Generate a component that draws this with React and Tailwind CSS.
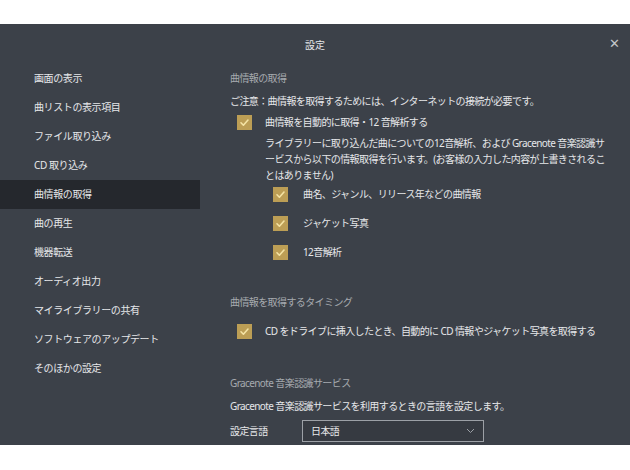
import React from "react";

const font = { fontFamily: '"Noto Sans", "Noto Sans CJK JP", sans-serif' };

function Check({ className = "" }) {
  return (
    <span className={`flex h-[15px] w-[15px] shrink-0 items-center justify-center bg-[#bc9e55] ${className}`}>
      <svg width="11" height="11" viewBox="0 0 11 11" fill="none">
        <path d="M2 5.8 L4.4 8.2 L9 3" stroke="#f4e3a4" strokeWidth="1.6" strokeLinecap="round" strokeLinejoin="round" />
      </svg>
    </span>
  );
}

const items = [
  "画面の表示",
  "曲リストの表示項目",
  "ファイル取り込み",
  "CD 取り込み",
  "曲情報の取得",
  "曲の再生",
  "機器転送",
  "オーディオ出力",
  "マイライブラリーの共有",
  "ソフトウェアのアップデート",
  "そのほかの設定",
];

export default function App() {
  return (
    <div className="w-[630px] h-[470px] bg-white pt-[24px] overflow-hidden" style={font}>
      <div className="h-[421px] bg-[#3c4149] flex flex-col text-[#e6e7e9] overflow-hidden">
        <div className="relative h-[40px] shrink-0 flex items-center justify-center text-[10px] pt-[2px]">
          <span>設定</span>
          <span className="absolute right-[10px] top-[13px] text-[#c3c6ca] text-[13px] leading-none">✕</span>
        </div>
        <div className="flex flex-1 min-h-0">
          <div className="w-[200px] shrink-0 flex flex-col tracking-[-0.4px]">
            {items.map((t, i) => (
              <div
                key={t}
                className={`h-[29px] shrink-0 flex items-center pl-[34px] text-[10px] whitespace-nowrap ${i === 4 ? "bg-[#25282d]" : ""}`}
              >
                {t}
              </div>
            ))}
          </div>
          <div className="flex-1 pl-[30px] pt-[6px] text-[10px] leading-[16px] flex flex-col tracking-[-0.6px] whitespace-nowrap">
            <div className="text-[#a6aaaf]">曲情報の取得</div>
            <div className="mt-[7px]">ご注意：曲情報を取得するためには、インターネットの接続が必要です。</div>
            <div className="mt-[3px] h-[20px] flex items-center pl-[7px]">
              <Check />
              <span className="ml-[13px]">曲情報を自動的に取得・12 音解析する</span>
            </div>
            <div className="mt-[3px] pl-[35px]">
              <div>ライブラリーに取り込んだ曲についての12音解析、および Gracenote 音楽認識サ</div>
              <div>ービスから以下の情報取得を行います。(お客様の入力した内容が上書きされるこ</div>
              <div>とはありません)</div>
            </div>
            <div className="mt-[1px] pl-[43px] flex flex-col gap-[9px]">
              {["曲名、ジャンル、リリース年などの曲情報", "ジャケット写真", "12音解析"].map((t) => (
                <div key={t} className="h-[20px] flex items-center">
                  <Check />
                  <span className="ml-[15px]">{t}</span>
                </div>
              ))}
            </div>
            <div className="mt-[32px] text-[#a6aaaf]">曲情報を取得するタイミング</div>
            <div className="mt-[11px] h-[20px] flex items-center pl-[7px]">
              <Check />
              <span className="ml-[13px]">CD をドライブに挿入したとき、自動的に CD 情報やジャケット写真を取得する</span>
            </div>
            <div className="mt-[34px] text-[#a6aaaf]">Gracenote 音楽認識サービス</div>
            <div className="mt-[7px]">Gracenote 音楽認識サービスを利用するときの言語を設定します。</div>
            <div className="mt-[6px] flex items-center h-[22px]">
              <span className="w-[72px]">設定言語</span>
              <div className="w-[182px] h-[22px] border border-[#9ca0a6] bg-[#363a41] flex items-center justify-between pl-[8px] pr-[8px]">
                <span>日本語</span>
                <svg width="9" height="6" viewBox="0 0 9 6" fill="none">
                  <path d="M1 1 L4.5 4.5 L8 1" stroke="#9ca0a6" strokeWidth="1" />
                </svg>
              </div>
            </div>
          </div>
        </div>
      </div>
    </div>
  );
}
